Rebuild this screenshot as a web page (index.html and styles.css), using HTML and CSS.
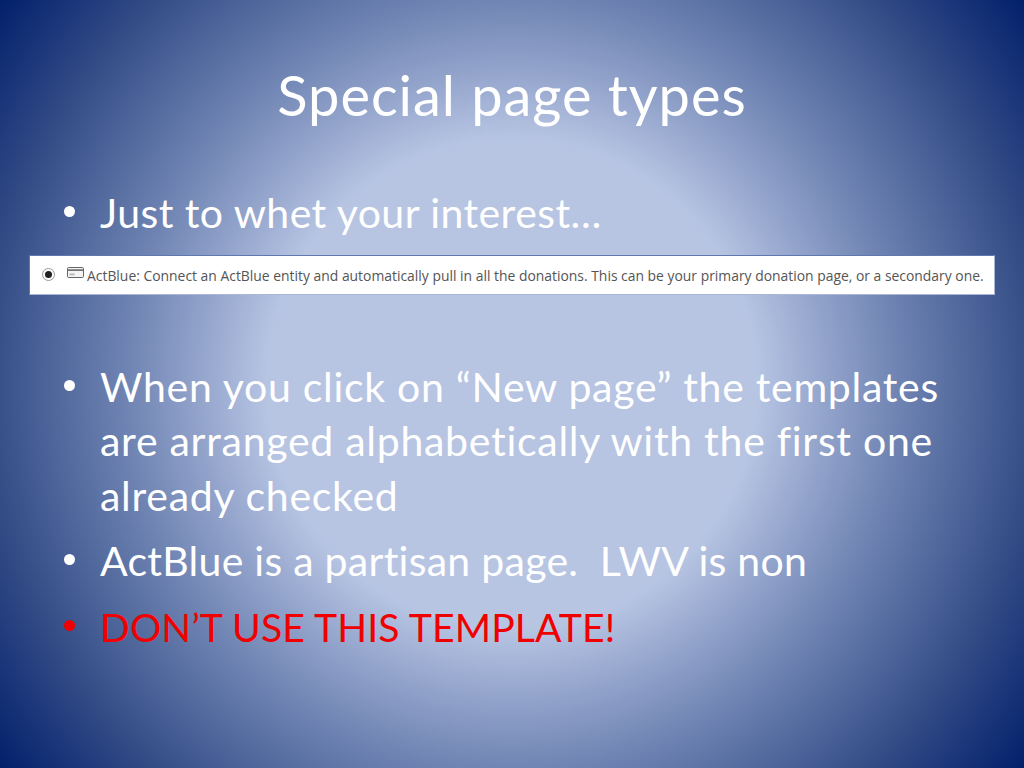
FILE: index.html
```html
<!DOCTYPE html>
<html lang="en">
<head>
<meta charset="utf-8">
<title>Special page types</title>
<link rel="stylesheet" href="styles.css">
</head>
<body>
<main class="slide">
  <h1 class="title">Special page types</h1>
  <ul class="bullets first">
    <li>Just to whet your interest…</li>
  </ul>
  <div class="strip">
    <span class="radio"><span class="radio-dot"></span></span>
    <svg class="card" viewBox="0 0 17 11" width="17" height="11" aria-hidden="true">
      <rect x="0.5" y="0.5" width="16" height="10" rx="1.2" fill="#f4f4f4" stroke="#666" stroke-width="1"/>
      <rect x="1" y="2.2" width="15" height="1.8" fill="#777"/>
      <rect x="2.5" y="6.5" width="5" height="1.8" fill="#b5b5b5"/>
    </svg>
    <span class="strip-text">ActBlue: Connect an ActBlue entity and automatically pull in all the donations. This can be your primary donation page, or a secondary one.</span>
  </div>
  <ul class="bullets second">
    <li class="wide">When you click on “New page” the templates are arranged alphabetically with the first one already checked</li>
    <li class="tight">ActBlue is a partisan page.&nbsp; LWV is non</li>
    <li class="warn">DON’T USE THIS TEMPLATE!</li>
  </ul>
</main>
</body>
</html>
```
FILE: styles.css
```css
html, body {
  margin: 0;
  padding: 0;
}
.slide {
  width: 1024px;
  height: 768px;
  overflow: hidden;
  box-sizing: border-box;
  display: flex;
  flex-direction: column;
  background: radial-gradient(circle 640px at 512px 384px, #b7c5e3 0, #b7c5e3 245px, #9aaad0 300px, #6f84b3 386px, #375089 515px, #021f6b 640px);
  color: #fff;
  font-family: "Lato", "Liberation Sans", sans-serif;
}
.title {
  margin: 0;
  padding-top: 60px;
  height: 72px;
  text-align: center;
  font-weight: 400;
  font-size: 56px;
  letter-spacing: 0.95px;
  line-height: 70px;
}
.bullets {
  list-style: none;
  margin: 0;
  font-size: 41px;
  letter-spacing: 0.45px;
  line-height: 54.5px;
}
.bullets li {
  position: relative;
  padding-left: 100px;
  padding-right: 44px;
  margin-bottom: 11px;
}
.bullets li::before {
  content: "";
  position: absolute;
  left: 64px;
  top: 20px;
  width: 11px;
  height: 11px;
  border-radius: 50%;
  background: currentColor;
}
.first {
  padding: 54px 0 0;
}
.strip {
  margin: 3.5px 0 0 29px;
  width: 966px;
  height: 39.5px;
  box-sizing: border-box;
  background: #fff;
  border: 1px solid #a9b6d6;
  border-top-color: #5f78ad;
  border-left-color: #5f78ad;
  display: flex;
  align-items: center;
  padding: 0 0 0 12px;
  color: #555;
  font-family: "Open Sans", sans-serif;
  font-size: 13.9px;
  white-space: nowrap;
}
.radio {
  width: 13px;
  height: 13px;
  box-sizing: border-box;
  border: 1px solid #999;
  border-radius: 50%;
  display: flex;
  align-items: center;
  justify-content: center;
  margin-right: 12px;
  margin-top: -1px;
}
.radio-dot {
  width: 7px;
  height: 7px;
  border-radius: 50%;
  background: #222;
}
.card {
  margin-right: 3px;
  margin-top: -5px;
  flex: none;
}
.strip-text {
  flex: none;
  margin-top: 2px;
}
.second {
  padding: 65px 0 0;
}
.bullets .wide {
  letter-spacing: 0.72px;
}
.bullets .tight {
  letter-spacing: 0.26px;
}
.warn {
  color: #f00000;
  font-size: 39.2px;
  letter-spacing: 0.1px;
}
```
